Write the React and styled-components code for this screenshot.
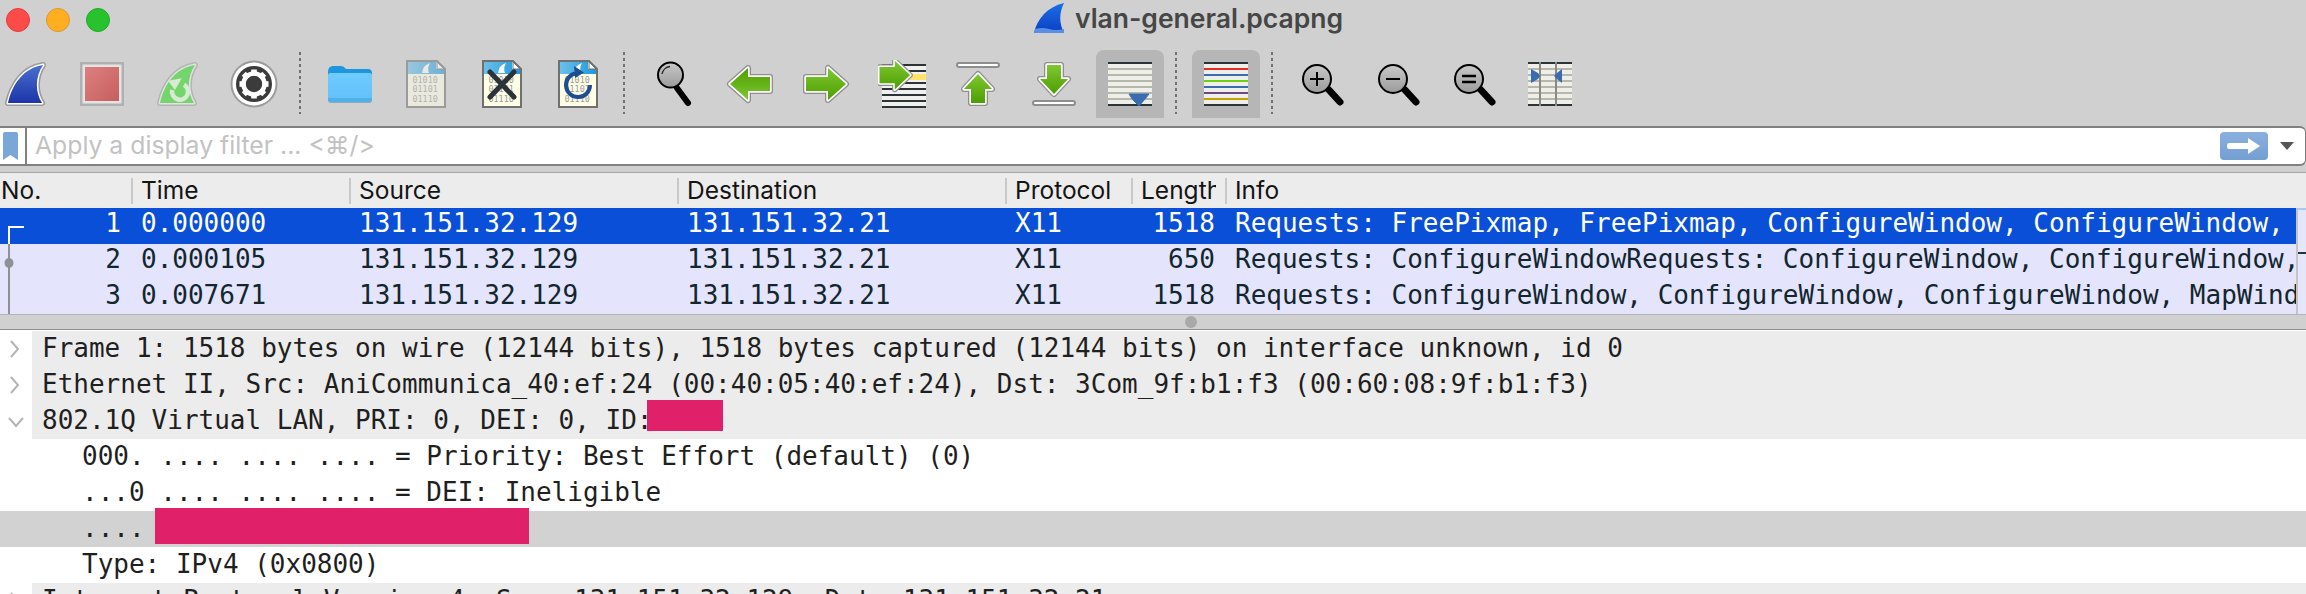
import React from "react";
import styled, { createGlobalStyle } from "styled-components";

const Global = createGlobalStyle`
  html, body { margin: 0; padding: 0; background: #d0d0d0; }
  body { font-family: "Inter", "Liberation Sans", sans-serif; }
`;

const MONO = `"DejaVu Sans Mono", "Liberation Mono", monospace`;
const COLS = "131px 218px 328px 328px 126px 94px 1071px";

const Page = styled.div`
  width: 2306px;
  height: 594px;
  overflow: hidden;
  background: #d0d0d0;
`;
const TitleBar = styled.div`
  height: 50px;
  display: flex;
  align-items: flex-start;
  padding: 8px 0 0 6px;
  box-sizing: border-box;
`;
const Lights = styled.div`
  display: flex;
  gap: 16px;
`;
const Light = styled.span`
  width: 24px;
  height: 24px;
  border-radius: 50%;
  box-sizing: border-box;
  background: ${(p) => p.$c};
  border: 1px solid ${(p) => p.$b};
`;
const Title = styled.div`
  display: flex;
  align-items: center;
  gap: 10px;
  margin: -5px 0 0 924px;
  height: 30px;
  font-size: 26.5px;
  font-weight: 600;
  color: #464646;
  white-space: pre;
`;
const Toolbar = styled.div`
  height: 76px;
  margin-left: -12px;
  display: flex;
  align-items: flex-start;
`;
const Slot = styled.div`
  width: 76px;
  height: 68px;
  flex: none;
  display: flex;
  align-items: center;
  justify-content: center;
  position: relative;
  z-index: 0;
  &::before {
    content: "";
    display: ${(p) => (p.$on ? "block" : "none")};
    position: absolute;
    z-index: -1;
    inset: 0 4px;
    background: #b6b6b6;
    border-radius: 8px 8px 0 0;
  }
`;
const Sep = styled.div`
  width: 16px;
  height: 62px;
  flex: none;
  margin: 2px 4px 0 0;
  display: flex;
  justify-content: center;
  &::after {
    content: "";
    width: 2px;
    height: 100%;
    background-image: linear-gradient(#707070 50%, transparent 50%);
    background-size: 2px 6px;
  }
`;
const FilterBar = styled.div`
  height: 40px;
  box-sizing: border-box;
  display: flex;
  align-items: stretch;
  background: #fff;
  border: 2px solid #808080;
  border-width: 2px 1px 2px 0;
  border-radius: 0 6px 6px 0;
`;
const Bookmark = styled.div`
  width: 27px;
  flex: none;
  box-sizing: border-box;
  border-right: 2px solid #808080;
  padding: 4px 0 0 2px;
`;
const Placeholder = styled.div`
  flex: 1;
  padding-left: 8px;
  font-size: 24.75px;
  line-height: 35px;
  color: #c2c2c2;
  white-space: pre;
`;
const Apply = styled.div`
  width: 48px;
  height: 28px;
  margin: 4px 0 0;
  border-radius: 4px;
  background: linear-gradient(#8bb0de, #749fd2);
  display: flex;
  align-items: center;
  justify-content: center;
`;
const Drop = styled.div`
  width: 37px;
  flex: none;
  display: flex;
  align-items: center;
  justify-content: center;
`;
const Gap = styled.div`
  height: 6px;
  border-bottom: 1px solid #a6a6a6;
`;
const Header = styled.div`
  height: 35px;
  display: grid;
  grid-template-columns: ${COLS};
  align-items: center;
  background: #ececec;
`;
const HeadCell = styled.div`
  height: 26px;
  box-sizing: border-box;
  overflow: ${(p) => (p.$clip ? "hidden" : "visible")};
  margin-right: ${(p) => (p.$clip ? "9px" : "0")};
  padding-left: ${(p) => (p.$first ? "1px" : "8px")};
  border-left: ${(p) => (p.$first ? "none" : "2px solid #c9c9c9")};
  font-size: 24.5px;
  line-height: 24px;
  color: #141414;
  white-space: pre;
`;
const ListWrap = styled.div`
  height: 106px;
  display: flex;
  position: relative;
  border-bottom: 1px solid #b4b4b4;
`;
const List = styled.div`
  width: 2296px;
  flex: none;
  overflow: hidden;
`;
const Row = styled.div`
  height: 36px;
  display: grid;
  grid-template-columns: ${COLS};
  background: ${(p) => (p.$sel ? "#0a4fd8" : "#e4e4fd")};
  color: ${(p) => (p.$sel ? "#fff" : "#12262e")};
  font-family: ${MONO};
  font-size: 26px;
  line-height: 30px;
`;
const Cell = styled.div`
  padding: 0 ${(p) => (p.$right ? "10px" : "0")} 0 ${(p) => (p.$right ? "0" : "10px")};
  text-align: ${(p) => (p.$right ? "right" : "left")};
  white-space: pre;
`;
const Mini = styled.div`
  width: 10px;
  flex: none;
  box-sizing: border-box;
  border-left: 2px solid #c4c4c4;
  border-top: 2px solid #a6c8f5;
  background: #e6e6fb;
  position: relative;
  &::after {
    content: "";
    position: absolute;
    left: 0;
    right: 0;
    top: 42px;
    height: 2px;
    background: #24343c;
  }
`;
const Graph = styled.svg`
  position: absolute;
  left: 0;
  top: 0;
`;
const Splitter = styled.div`
  height: 15px;
  display: flex;
  align-items: center;
  box-sizing: border-box;
  padding-left: 1185px;
  border-bottom: 1px solid #8c8c8c;
  &::after {
    content: "";
    width: 12px;
    height: 12px;
    border-radius: 50%;
    background: #a9a9a9;
  }
`;
const Details = styled.div`
  background: #fff;
  padding-top: 1px;
  height: 263px;
  overflow: hidden;
  font-family: ${MONO};
  font-size: 26px;
  line-height: 34px;
  color: #1f1f1f;
`;
const DetailRow = styled.div`
  height: 36px;
  position: relative;
  box-sizing: border-box;
  white-space: pre;
  padding-left: ${(p) => (p.$child ? "82px" : "42px")};
  background: ${(p) =>
    p.$picked ? "#d2d2d2" : p.$child ? "#fff" : "linear-gradient(90deg, #fff 32px, #ececec 32px)"};
`;
const Chevron = styled.svg`
  position: absolute;
  left: 7px;
  top: 8px;
`;
const Redact = styled.div`
  position: absolute;
  left: ${(p) => p.$x}px;
  top: -3px;
  width: ${(p) => p.$w}px;
  height: ${(p) => p.$h}px;
  background: #e0216a;
`;
const Defs = styled.svg`
  position: absolute;
  width: 0;
  height: 0;
`;

const GRAY = "#8e8e8e";
const Ico = ({ children, w = 48, h = 48 }) => (
  <svg width={w} height={h} viewBox={`0 0 ${w} ${h}`}>{children}</svg>
);

const FIN = "M6 43 C10 25 21 8 41 5 C33 17 33 32 40 43 Z";
const Fin = ({ fill, ring, inner }) => (
  <g strokeLinejoin="round">
    <path d={FIN} fill={ring} stroke={ring} strokeWidth="6" />
    <path d={FIN} fill={inner} stroke={inner} strokeWidth="3" />
    <path d={FIN} fill={fill} />
  </g>
);
const Start = () => (
  <Ico><Fin fill="url(#gBlue)" ring="#9a9a9a" inner="#fff" /></Ico>
);
const Stop = () => (
  <Ico>
    <rect x="2" y="2" width="44" height="44" fill="#b0b0b0" />
    <rect x="4.5" y="4.5" width="39" height="39" fill="#e4e4e4" />
    <rect x="7" y="7" width="34" height="34" fill="url(#gRed)" />
  </Ico>
);
const Restart = () => (
  <Ico>
    <Fin fill="#74d56c" ring="#b4b4b4" inner="#e2e2e2" />
    <path d="M30 24.7 A8 8 0 1 1 18.2 30" fill="none" stroke="#d6ebd0" strokeWidth="4.5" />
    <path d="M14 20.7 L27.7 18.3 L21 30 Z" fill="#d6ebd0" />
  </Ico>
);
const Gear = () => (
  <Ico>
    <circle cx="24" cy="24" r="23.5" fill="#9c9c9c" />
    <circle cx="24" cy="24" r="21.5" fill="#fff" />
    <circle cx="24" cy="24" r="18" fill="#3b3b3b" />
    <circle cx="24" cy="24" r="10.5" fill="none" stroke="#fff" strokeWidth="4.5" />
    {[0, 45, 90, 135, 180, 225, 270, 315].map((a) => (
      <rect key={a} x="21.2" y="9.5" width="5.6" height="6" fill="#fff" transform={`rotate(${a} 24 24)`} />
    ))}
  </Ico>
);
const Folder = () => (
  <Ico>
    <path d="M2 12 Q2 6 7 6 H15 Q18 6 20 9 H42 Q46 9 46 13 V20 H2 Z" fill="#1d95df" />
    <rect x="2" y="13" width="44" height="30" rx="3" fill="#8fa9bb" />
    <rect x="2" y="13" width="44" height="29" rx="3" fill="url(#gFolder)" />
  </Ico>
);
const Doc = ({ dim, children }) => (
  <Ico>
    <g opacity={dim ? 0.55 : 1}>
      <path d="M5 1 H35 L43 9 V47 H5 Z" fill="#fefee6" stroke="#707070" strokeWidth="2" />
      <path d="M6 2 H34 L34 9 H42 V14 H6 Z" fill="url(#gSky)" />
      <path d="M20 13 Q21 5 28 3 Q25 8 27 13 Z" fill="#fff" />
      <path d="M35 2 L42 9 H35 Z" fill="#fff" stroke="#707070" strokeWidth="1" />
      <g fontFamily={MONO} fontSize="8.4" fill="#9a9a9a">
        <text x="10.5" y="23">01010</text>
        <text x="10.5" y="32.3">01101</text>
        <text x="10.5" y="41.7">01110</text>
      </g>
    </g>
    {children}
  </Ico>
);
const Close = () => (
  <Doc>
    <path d="M12 12 L36 37 M36 12 L12 37" stroke="#2b3238" strokeWidth="5" strokeLinecap="round" />
  </Doc>
);
const Reload = () => (
  <Doc>
    <path d="M22 13.2 A12 12 0 1 0 36 25" fill="none" stroke="#1f4d91" strokeWidth="4" />
    <path d="M20 6 L30 12.5 L21 18 Z" fill="#1f4d91" />
  </Doc>
);
const Search = () => (
  <Ico>
    <path d="M27 28 L38 43" stroke="#000" strokeWidth="6" strokeLinecap="round" />
    <circle cx="20.5" cy="15" r="12.5" fill="url(#gLens)" stroke="#000" strokeWidth="2" />
    <path d="M12 14 A9 9 0 0 1 20 6.5" fill="none" stroke="#222" strokeWidth="1.3" />
  </Ico>
);
const ARROW_R = "M44 24 L26 8 V17 H4 V31 H26 V40 Z";
const ArrowShape = ({ d, t }) => (
  <g transform={t} strokeLinejoin="round">
    <path d={d} fill={GRAY} stroke={GRAY} strokeWidth="6" />
    <path d={d} fill="#fff" stroke="#fff" strokeWidth="3.4" />
    <path d={d} fill="url(#gGreen)" />
  </g>
);
const Left = () => <Ico><ArrowShape d={ARROW_R} t="rotate(180 24 24)" /></Ico>;
const Right = () => <Ico><ArrowShape d={ARROW_R} /></Ico>;
const Bar = ({ y }) => (
  <rect x="3" y={y} width="42" height="4" rx="2" fill="#fff" stroke={GRAY} strokeWidth="2" />
);
const Up = () => (
  <Ico>
    <Bar y="3" />
    <ArrowShape d="M24 14 L38 29 H31 V43 H17 V29 H10 Z" />
  </Ico>
);
const Down = () => (
  <Ico>
    <Bar y="41" />
    <ArrowShape d="M24 34 L38 19 H31 V5 H17 V19 H10 Z" />
  </Ico>
);
const rows = (ys, c, x = 2, w = 44, h = 2) =>
  ys.map((y) => <rect key={y} x={x} y={y} width={w} height={h} fill={c} />);
const GoTo = () => (
  <Ico>
    <rect x="4" y="4" width="44" height="44" fill="#f0f0ee" />
    {rows([4, 10, 16, 22, 28, 34, 40, 46], "#2c3438", 4, 44)}
    <rect x="30" y="14" width="18" height="6" fill="#ffe36a" />
    <g transform="translate(-7.5 -6.5) scale(.9)">
      <ArrowShape d="M44 24 L27 8 V15 H10 V33 H27 V40 Z" />
    </g>
  </Ico>
);
const Stripes = () => (
  <>
    <rect x="2" y="2" width="44" height="44" fill="#eeeeea" />
    {rows([8, 14, 20, 26, 32, 38], "#b7b7aa")}
    {rows([2, 44], "#2c3438")}
  </>
);
const AutoScroll = () => (
  <Ico>
    <Stripes />
    <path d="M23 34 H43 L39 39 L33 46 L27 40 Z" fill="#3a6cb0" stroke="#3a6cb0" strokeLinejoin="round" />
  </Ico>
);
const Colorize = () => {
  const lines = ["#2c3438", "#e52a2a", "#3a6db0", "#6fd010", "#3a6db0", "#6a4a80", "#c8a000", "#2c3438"];
  return (
    <Ico>
      <rect x="2" y="2" width="44" height="44" fill="#eeeeea" />
      {lines.map((c, i) => (
        <rect key={i} x="2" y={2 + i * 6} width="44" height="2" fill={c} />
      ))}
    </Ico>
  );
};
const Zoom = ({ children }) => (
  <Ico>
    <path d="M31 30 L42 42" stroke="#000" strokeWidth="7" strokeLinecap="round" />
    <circle cx="19" cy="19" r="14" fill="url(#gLens)" stroke="#000" strokeWidth="2" />
    <g stroke="#000" strokeWidth="2">{children}</g>
  </Ico>
);
const Resize = () => (
  <Ico>
    <Stripes />
    <rect x="13" y="2" width="2" height="44" fill="#8a8a80" />
    <rect x="29" y="2" width="2" height="44" fill="#8a8a80" />
    <path d="M5 9 L12 13 L14 16 L12 19 L5 23 Z" fill="#3a6cb0" />
    <path d="M36 9 L31 13 L28 16 L31 19 L36 23 Z" fill="#3a6cb0" />
  </Ico>
);

const Packets = [
  ["1", "0.000000", "131.151.32.129", "131.151.32.21", "X11", "1518", "Requests: FreePixmap, FreePixmap, ConfigureWindow, ConfigureWindow, "],
  ["2", "0.000105", "131.151.32.129", "131.151.32.21", "X11", "650", "Requests: ConfigureWindowRequests: ConfigureWindow, ConfigureWindow, ConfigureWindow"],
  ["3", "0.007671", "131.151.32.129", "131.151.32.21", "X11", "1518", "Requests: ConfigureWindow, ConfigureWindow, ConfigureWindow, MapWindow, MapWindow"],
];

const Arrow = ({ open }) => (
  <Chevron width="18" height="20" viewBox="0 0 18 20">
    <path
      d={open ? "M2 7 L9 15 L16 7" : "M4 2 L11 10 L4 18"}
      fill="none"
      stroke="#b4b4b4"
      strokeWidth="2"
    />
  </Chevron>
);

export default function App() {
  return (
    <Page>
      <Global />
      <Defs>
        <defs>
          <linearGradient id="gBlue" x1="0" y1="0" x2="0" y2="1">
            <stop offset="0" stopColor="#4a6fd0" />
            <stop offset="1" stopColor="#1d34a8" />
          </linearGradient>
          <linearGradient id="gRed" x1="0" y1="0" x2="1" y2="1">
            <stop offset="0" stopColor="#dd7f7f" />
            <stop offset="1" stopColor="#c65f5f" />
          </linearGradient>
          <linearGradient id="gFolder" x1="0" y1="0" x2="0" y2="1">
            <stop offset="0" stopColor="#6fcbff" />
            <stop offset=".85" stopColor="#64c2fa" />
            <stop offset=".86" stopColor="#4fb0ea" />
            <stop offset="1" stopColor="#4fb0ea" />
          </linearGradient>
          <linearGradient id="gSky" x1="0" y1="0" x2="1" y2="0">
            <stop offset="0" stopColor="#6cc0ea" />
            <stop offset="1" stopColor="#1f98dc" />
          </linearGradient>
          <linearGradient id="gLens" x1="0" y1="0" x2="0" y2="1">
            <stop offset="0" stopColor="#c9c9c9" />
            <stop offset="1" stopColor="#9b9b9b" />
          </linearGradient>
          <linearGradient id="gGreen" x1="0" y1="0" x2="0" y2="1">
            <stop offset="0" stopColor="#7fc832" />
            <stop offset="1" stopColor="#4d9e00" />
          </linearGradient>
          <linearGradient id="gTitle" x1="0" y1="0" x2="0" y2="1">
            <stop offset="0" stopColor="#1a6ee8" />
            <stop offset="1" stopColor="#0d3ec4" />
          </linearGradient>
        </defs>
      </Defs>

      <TitleBar>
        <Lights>
          <Light $c="#ff4a4a" $b="#e03e3e" />
          <Light $c="#ffae22" $b="#e0962a" />
          <Light $c="#28c22e" $b="#24a82a" />
        </Lights>
        <Title>
          <svg width="31" height="30" viewBox="0 0 31 30">
            <path d="M0 30 C3 16 13 4 30 0 C25 10 25 20 30 30 Z" fill="url(#gTitle)" />
            <path d="M1 26 Q8 24 15 26 T30 26 V30 H0 Z" fill="#5b8fe6" />
          </svg>
          vlan-general.pcapng
        </Title>
      </TitleBar>

      <Toolbar>
        <Slot><Start /></Slot>
        <Slot><Stop /></Slot>
        <Slot><Restart /></Slot>
        <Slot><Gear /></Slot>
        <Sep />
        <Slot><Folder /></Slot>
        <Slot><Doc dim /></Slot>
        <Slot><Close /></Slot>
        <Slot><Reload /></Slot>
        <Sep />
        <Slot><Search /></Slot>
        <Slot><Left /></Slot>
        <Slot><Right /></Slot>
        <Slot><GoTo /></Slot>
        <Slot><Up /></Slot>
        <Slot><Down /></Slot>
        <Slot $on><AutoScroll /></Slot>
        <Sep />
        <Slot $on><Colorize /></Slot>
        <Sep />
        <Slot>
          <Zoom><path d="M12 19 H26 M19 12 V26" /></Zoom>
        </Slot>
        <Slot>
          <Zoom><path d="M12 19 H26" /></Zoom>
        </Slot>
        <Slot>
          <Zoom><path d="M12 16 H26 M12 22 H26" strokeWidth="2.4" /></Zoom>
        </Slot>
        <Slot><Resize /></Slot>
      </Toolbar>

      <FilterBar>
        <Bookmark>
          <svg width="17" height="28" viewBox="0 0 17 28">
            <path d="M1 2 Q1 0 3 0 H14 Q16 0 16 2 V28 L8.5 23 L1 28 Z" fill="#7ba6d8" />
          </svg>
        </Bookmark>
        <Placeholder>Apply a display filter ... &lt;⌘/&gt;</Placeholder>
        <Apply>
          <svg width="34" height="18" viewBox="0 0 34 18">
            <path d="M2 6 H21 V1 L33 9 L21 17 V12 H2 Q0 12 0 9 Q0 6 2 6 Z" fill="#fff" />
          </svg>
        </Apply>
        <Drop>
          <svg width="14" height="8" viewBox="0 0 14 8">
            <path d="M0 0 H14 L7 8 Z" fill="#555" />
          </svg>
        </Drop>
      </FilterBar>

      <Gap />
      <Header>
        <HeadCell $first>No.</HeadCell>
        <HeadCell>Time</HeadCell>
        <HeadCell>Source</HeadCell>
        <HeadCell>Destination</HeadCell>
        <HeadCell>Protocol</HeadCell>
        <HeadCell $clip>Length</HeadCell>
        <HeadCell>Info</HeadCell>
      </Header>

      <ListWrap>
        <List>
          {Packets.map((p, i) => (
            <Row key={p[0]} $sel={i === 0}>
              <Cell $right>{p[0]}</Cell>
              <Cell>{p[1]}</Cell>
              <Cell>{p[2]}</Cell>
              <Cell>{p[3]}</Cell>
              <Cell>{p[4]}</Cell>
              <Cell $right>{p[5]}</Cell>
              <Cell>{p[6]}</Cell>
            </Row>
          ))}
        </List>
        <Mini />
        <Graph width="30" height="106" viewBox="0 0 30 106">
          <path d="M24 19 H9 V36" fill="none" stroke="#fff" strokeWidth="2" />
          <path d="M9 36 V106" stroke="#8d9296" strokeWidth="2" />
          <ellipse cx="9" cy="55" rx="4.5" ry="5" fill="#8d9296" />
        </Graph>
      </ListWrap>

      <Splitter />

      <Details>
        <DetailRow>
          <Arrow />
          Frame 1: 1518 bytes on wire (12144 bits), 1518 bytes captured (12144 bits) on interface unknown, id 0
        </DetailRow>
        <DetailRow>
          <Arrow />
          Ethernet II, Src: AniCommunica_40:ef:24 (00:40:05:40:ef:24), Dst: 3Com_9f:b1:f3 (00:60:08:9f:b1:f3)
        </DetailRow>
        <DetailRow>
          <Arrow open />
          802.1Q Virtual LAN, PRI: 0, DEI: 0, ID:
          <Redact $x={647} $w={76} $h={31} />
        </DetailRow>
        <DetailRow $child>000. .... .... .... = Priority: Best Effort (default) (0)</DetailRow>
        <DetailRow $child>...0 .... .... .... = DEI: Ineligible</DetailRow>
        <DetailRow $child $picked>
          ....
          <Redact $x={155} $w={374} $h={36} />
        </DetailRow>
        <DetailRow $child>Type: IPv4 (0x0800)</DetailRow>
        <DetailRow>
          <Arrow />
          Internet Protocol Version 4, Src: 131.151.32.129, Dst: 131.151.32.21
        </DetailRow>
      </Details>
    </Page>
  );
}
